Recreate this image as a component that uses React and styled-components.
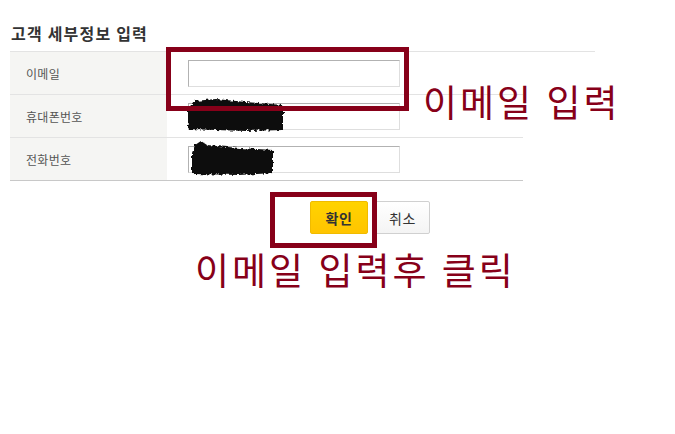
import React from "react";
import styled, { createGlobalStyle } from "styled-components";

const GlobalStyle = createGlobalStyle`
  body {
    margin: 0;
    background: #ffffff;
    font-family: "Noto Sans CJK KR", "Noto Sans", sans-serif;
  }
`;

const Page = styled.div`
  position: relative;
  width: 675px;
  height: 434px;
  overflow: hidden;
`;

const Heading = styled.h3`
  margin: 0 0 0 10px;
  width: 585px;
  height: 52px;
  padding: 23px 0 0 1px;
  box-sizing: border-box;
  line-height: 20px;
  font-size: 16px;
  letter-spacing: 1.2px;
  font-weight: bold;
  color: #333;
  border-bottom: 1px solid #e3e3e3;
`;

const Table = styled.div`
  margin-left: 10px;
  width: 513px;
`;

const Row = styled.div`
  display: flex;
  height: 42px;
  border-bottom: 1px solid ${(p) => (p.$last ? "#c8c8c8" : "#e3e3e3")};
`;

const LabelCell = styled.div`
  width: 157px;
  background: #f5f5f3;
  display: flex;
  align-items: center;
  padding-left: 16px;
  box-sizing: border-box;
  font-size: 12px;
  letter-spacing: 0.3px;
  color: #555;
`;

const FieldCell = styled.div`
  position: relative;
  flex: 1;
  display: flex;
  align-items: center;
  padding-left: 21px;
`;

const Input = styled.input`
  width: 212px;
  height: 27px;
  box-sizing: border-box;
  margin: 1px 0 0 0;
  padding: 0 6px;
  border: 1px solid;
  border-color: #b2b2b2 #dedede #dedede #b2b2b2;
  background: #fff;
  outline: none;
`;

const Redact = styled.svg`
  position: absolute;
  left: ${(p) => p.$x}px;
  top: ${(p) => p.$y}px;
  overflow: visible;
`;

const ButtonRow = styled.div`
  display: flex;
  gap: 7px;
  margin-top: 20px;
  padding-left: 310px;
`;

const Button = styled.button`
  height: 33px;
  width: ${(p) => (p.$primary ? "58px" : "55px")};
  padding: 0;
  border-radius: 2px;
  font-family: inherit;
  font-size: 14px;
  letter-spacing: 0.5px;
  font-weight: ${(p) => (p.$primary ? "bold" : "normal")};
  color: #333;
  border: 1px solid ${(p) => (p.$primary ? "#f0bb00" : "#d0d0d0")};
  background: ${(p) =>
    p.$primary
      ? "linear-gradient(#ffd300, #ffc400)"
      : "linear-gradient(#ffffff, #f4f4f4)"};
`;

const Highlight = styled.div`
  position: absolute;
  left: ${(p) => p.$x}px;
  top: ${(p) => p.$y}px;
  width: ${(p) => p.$w}px;
  height: ${(p) => p.$h}px;
  box-sizing: border-box;
  border: 5px solid #870019;
`;

const Note = styled.div`
  position: absolute;
  left: ${(p) => p.$x}px;
  top: ${(p) => p.$y}px;
  font-size: 37px;
  line-height: 1;
  color: #870019;
  white-space: nowrap;
  letter-spacing: 3px;
  word-spacing: 1px;
`;

const Scribble = ({ x, y, w, h, points, seed }) => (
  <Redact $x={x} $y={y} width={w} height={h} viewBox={`0 0 ${w} ${h}`}>
    <defs>
      <filter id={`rough${seed}`} x="-10%" y="-20%" width="120%" height="140%">
        <feTurbulence type="fractalNoise" baseFrequency="0.35" numOctaves="2" seed={seed} />
        <feDisplacementMap in="SourceGraphic" scale="5" />
        <feGaussianBlur stdDeviation="0.5" />
      </filter>
    </defs>
    <polygon points={points} fill="#111" filter={`url(#rough${seed})`} />
  </Redact>
);

export default function App() {
  return (
    <Page>
      <GlobalStyle />
      <Heading>고객 세부정보 입력</Heading>
      <Table>
        <Row>
          <LabelCell>이메일</LabelCell>
          <FieldCell>
            <Input />
          </FieldCell>
        </Row>
        <Row>
          <LabelCell>휴대폰번호</LabelCell>
          <FieldCell>
            <Input />
            <Scribble
              x={19}
              y={2}
              w={100}
              h={36}
              seed={3}
              points="8,4 30,2 60,5 97,8 97,33 60,34 30,33 2,32 2,12"
            />
          </FieldCell>
        </Row>
        <Row $last>
          <LabelCell>전화번호</LabelCell>
          <FieldCell>
            <Input />
            <Scribble
              x={22}
              y={1}
              w={88}
              h={38}
              seed={7}
              points="6,6 12,2 18,6 50,9 84,11 84,34 50,36 3,35 3,14"
            />
          </FieldCell>
        </Row>
      </Table>
      <ButtonRow>
        <Button $primary>확인</Button>
        <Button>취소</Button>
      </ButtonRow>
      <Highlight $x={166} $y={47} $w={243} $h={64} />
      <Highlight $x={270} $y={192} $w={107} $h={56} />
      <Note $x={423} $y={83}>이메일 입력</Note>
      <Note $x={195} $y={251}>이메일 입력후 클릭</Note>
    </Page>
  );
}
